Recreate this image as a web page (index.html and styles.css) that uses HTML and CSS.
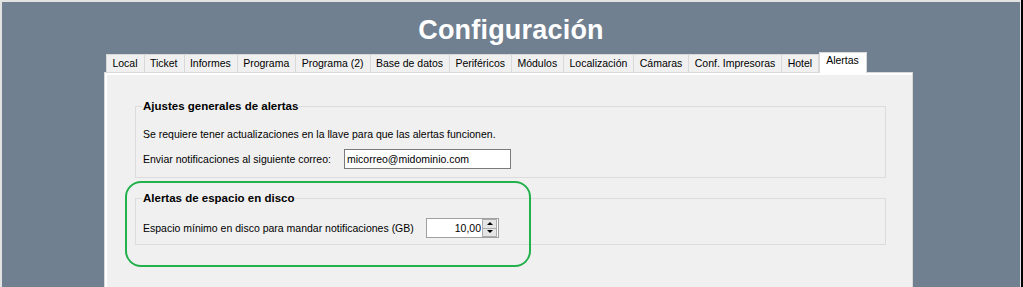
FILE: index.html
```html
<!DOCTYPE html>
<html lang="es">
<head>
  <meta charset="UTF-8">
  <title>Configuración</title>
  <link rel="stylesheet" href="styles.css">
</head>
<body>
  <div class="screen">
    <div class="window">
      <h1 class="title">Configuración</h1>

      <div class="tabs">
        <div class="tabstrip">
          <div class="tab">Local</div>
          <div class="tab">Ticket</div>
          <div class="tab">Informes</div>
          <div class="tab">Programa</div>
          <div class="tab">Programa (2)</div>
          <div class="tab">Base de datos</div>
          <div class="tab">Periféricos</div>
          <div class="tab">Módulos</div>
          <div class="tab">Localización</div>
          <div class="tab">Cámaras</div>
          <div class="tab">Conf. Impresoras</div>
          <div class="tab">Hotel</div>
          <div class="tab active">Alertas</div>
        </div>

        <div class="page">
          <fieldset class="group general">
            <legend>Ajustes generales de alertas</legend>
            <p class="note">Se requiere tener actualizaciones en la llave para que las alertas funcionen.</p>
            <div class="row">
              <label class="label-mail" for="mail">Enviar notificaciones al siguiente correo:</label>
              <input id="mail" class="textbox" type="text" value="micorreo@midominio.com">
            </div>
          </fieldset>

          <fieldset class="group disk">
            <legend>Alertas de espacio en disco</legend>
            <div class="row">
              <label class="label-disk" for="space">Espacio mínimo en disco para mandar notificaciones (GB)</label>
              <div class="updown">
                <input id="space" class="updown-value" type="text" value="10,00">
                <div class="updown-btns">
                  <span class="btn up"></span>
                  <span class="btn down"></span>
                </div>
              </div>
            </div>
          </fieldset>
        </div>
      </div>

      <!-- marca verde encima del grupo de disco -->
      <div class="highlight"></div>
    </div>
  </div>
</body>
</html>
```

FILE: styles.css
```css
body {
  margin: 0;
  font-family: "Liberation Sans", Arial, sans-serif;
  font-size: 10.5px;
  color: #000;
}

.screen {
  width: 1023px;
  height: 287px;
  box-sizing: border-box;
  border-right: 2px solid #000;
  overflow: hidden;
}
.window {
  position: relative;
  height: 100%;
  box-sizing: border-box;
  background: #708090;
  border-top: 2px solid #e3e3e3;
  border-left: 2px solid #e3e3e3;
  border-right: 1px solid #e3e3e3;
}

.title {
  margin: 0;
  height: 50px;
  box-sizing: border-box;
  padding-top: 13px;
  font-family: "Liberation Sans", Arial, sans-serif;
  font-size: 27px;
  line-height: 31px;
  font-weight: bold;
  color: #fff;
  text-align: center;
  letter-spacing: 0.2px;
}

.tabs {
  margin-left: 102px;
  width: 809px;
}
.tabstrip {
  display: flex;
  align-items: flex-end;
  height: 20px;
  padding-left: 2px;
}
.tab {
  height: 18px;
  box-sizing: border-box;
  padding: 0 6px 0 5.4px;
  margin-right: -1px;
  border: 1px solid #d9d9d9;
  border-bottom: none;
  background: #f0f0f0;
  line-height: 17px;
  white-space: nowrap;
}
.tab.active {
  position: relative;
  z-index: 1;
  height: 21px;
  margin-bottom: -1px;
  margin-left: 1px;
  padding: 0 7px 0 6px;
  background: #fff;
  line-height: 15px;
}

.page {
  height: 240px;
  box-sizing: border-box;
  background: #f0f0f0;
  border: 1px solid #d9d9d9;
  box-shadow: inset 2px 2px 0 #fff;
  padding: 27px 26px 0 30px;
}

.group {
  margin: 0;
  padding: 0 7px;
  border: 1px solid #dcdcdc;
  min-width: 0;
}
.group legend {
  margin-left: -1px;
  padding: 0 1px;
  font-size: 11.5px;
  font-weight: bold;
  line-height: 13px;
}
.general {
  padding-top: 15px;
  padding-bottom: 8px;
}
.disk {
  margin-top: 14px;
  padding-top: 13px;
  padding-bottom: 6px;
}

.note {
  margin: 0 0 8px;
  line-height: 13px;
}
.row {
  display: flex;
  align-items: center;
}
.row label {
  white-space: nowrap;
}
.label-mail { width: 201px; }
.label-disk { width: 283px; }

.textbox {
  width: 167px;
  height: 20px;
  box-sizing: border-box;
  margin: 0;
  padding: 0 2px;
  border: 1px solid #7a7a7a;
  background: #fff;
  font: inherit;
  outline: none;
}

.updown {
  display: flex;
  align-items: center;
  width: 73px;
  height: 20px;
  box-sizing: border-box;
  border: 1px solid #a0a0a0;
  background: #fff;
}
.updown-value {
  flex: 1;
  min-width: 0;
  margin: 0;
  padding: 0 1px 0 0;
  border: none;
  background: transparent;
  font: inherit;
  text-align: right;
  outline: none;
}
.updown-btns {
  display: flex;
  flex-direction: column;
  width: 15px;
  height: 18px;
  margin-right: 1px;
}
.btn {
  position: relative;
  flex: 1;
  background: #e5e5e5;
  border: 1px solid #acacac;
}
.btn.down { border-top: none; }
.btn::after {
  content: "";
  position: absolute;
  left: 4px;
  top: 2px;
  border-left: 3px solid transparent;
  border-right: 3px solid transparent;
}
.btn.up::after { border-bottom: 3px solid #000; }
.btn.down::after { border-top: 3px solid #000; top: 1px; }

.highlight {
  position: absolute;
  left: 123px;
  top: 179px;
  width: 406px;
  height: 86px;
  box-sizing: border-box;
  border: 2px solid #22b14c;
  border-radius: 16px;
}
```
